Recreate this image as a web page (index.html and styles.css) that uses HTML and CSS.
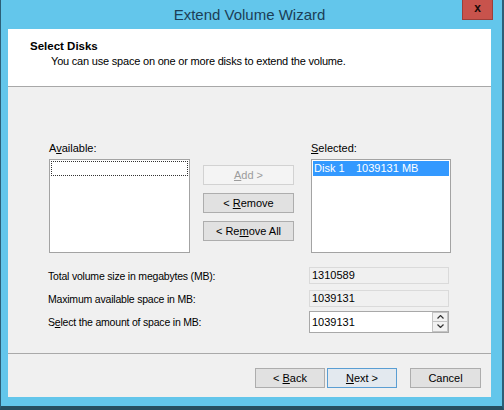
FILE: index.html
```html
<!DOCTYPE html>
<html lang="en">

<head>
    <meta charset="UTF-8">
    <link rel="stylesheet" href="styles.css">
    <title>Extend Volume Wizard</title>
</head>

<body>
    <div class="window">
        <div class="titlebar">
            <span class="title">Extend Volume Wizard</span>
            <div class="close-btn">x</div>
        </div>

        <div class="client">
            <div class="header">
                <div class="header-title">Select Disks</div>
                <div class="header-sub">You can use space on one or more disks to extend the volume.</div>
            </div>

            <div class="body">
                <div class="lists">
                    <div class="list-col left-col">
                        <div class="list-label">A<u>v</u>ailable:</div>
                        <div class="listbox">
                            <div class="list-row focus-row"></div>
                        </div>
                    </div>

                    <div class="move-buttons">
                        <button class="btn disabled"><u>A</u>dd &gt;</button>
                        <button class="btn">&lt; <u>R</u>emove</button>
                        <button class="btn">&lt; Re<u>m</u>ove All</button>
                    </div>

                    <div class="list-col right-col">
                        <div class="list-label"><u>S</u>elected:</div>
                        <div class="listbox">
                            <div class="list-row selected-row">
                                <span class="disk-name">Disk 1</span>
                                <span>1039131 MB</span>
                            </div>
                        </div>
                    </div>
                </div>

                <div class="fields">
                    <div class="field-row">
                        <label class="field-label">Total volume size in megabytes (MB):</label>
                        <div class="readonly-box">1310589</div>
                    </div>
                    <div class="field-row">
                        <label class="field-label">Maximum available space in MB:</label>
                        <div class="readonly-box">1039131</div>
                    </div>
                    <div class="field-row">
                        <label class="field-label" for="amount">S<u>e</u>lect the amount of space in MB:</label>
                        <div class="spin-box">
                            <input type="text" id="amount" value="1039131">
                            <div class="spin-buttons">
                                <div class="spin-btn">
                                    <svg width="7" height="4" viewBox="0 0 7 4"><path d="M0.5 3.5 L3.5 0.5 L6.5 3.5" fill="none" stroke="#333" stroke-width="1.2"/></svg>
                                </div>
                                <div class="spin-btn">
                                    <svg width="7" height="4" viewBox="0 0 7 4"><path d="M0.5 0.5 L3.5 3.5 L6.5 0.5" fill="none" stroke="#333" stroke-width="1.2"/></svg>
                                </div>
                            </div>
                        </div>
                    </div>
                </div>
            </div>

            <div class="footer">
                <button class="btn nav-btn">&lt; <u>B</u>ack</button>
                <button class="btn nav-btn default-btn"><u>N</u>ext &gt;</button>
                <button class="btn nav-btn cancel-btn">Cancel</button>
            </div>
        </div>
    </div>
</body>

</html>
```

FILE: styles.css
```css
body {
    margin: 0;
    font-family: "Liberation Sans", Arial, sans-serif;
    font-size: 11px;
    color: #000;
}

.window {
    width: 504px;
    height: 410px;
    box-sizing: border-box;
    background-color: #63c6eb;
    border-left: 1px solid #2c5f78;
    border-right: 2px solid #2c5f78;
    border-bottom: 4px solid #274e60;
    display: flex;
    flex-direction: column;
}

.titlebar {
    height: 29px;
    position: relative;
    display: flex;
    align-items: center;
    justify-content: center;
    flex-shrink: 0;
}

.title {
    font-size: 15px;
    color: #1c3e56;
    margin-left: -4px;
}

/* window close control sits over the title bar */
.close-btn {
    position: absolute;
    top: 0;
    right: 9px;
    width: 31px;
    height: 20px;
    box-sizing: border-box;
    background-color: #c8534c;
    border: 1px solid #9c3f3a;
    border-top: none;
    color: #1a0a08;
    font-weight: bold;
    font-size: 12px;
    line-height: 17px;
    text-align: center;
}

.client {
    flex: 1;
    margin: 0 11px 9px 7px;
    background-color: #f0f0f0;
    display: flex;
    flex-direction: column;
}

.header {
    height: 58px;
    box-sizing: border-box;
    background-color: #fff;
    border-bottom: 1px solid #a8a8a8;
    padding: 10px 0 0 22px;
}

.header-title {
    font-weight: bold;
    font-size: 11.5px;
    line-height: 14px;
}

.header-sub {
    line-height: 14px;
    padding-left: 21px;
    margin-top: 1px;
    letter-spacing: -0.2px;
}

.body {
    flex: 1;
    padding: 54px 0 0 41px;
}

.lists {
    display: flex;
    align-items: flex-start;
}

.list-label {
    line-height: 15px;
    margin-bottom: 3px;
}

.left-col .listbox {
    width: 141px;
}

.right-col {
    margin-left: 17px;
}

.right-col .listbox {
    width: 140px;
}

.listbox {
    height: 94px;
    box-sizing: border-box;
    background-color: #fff;
    border: 1px solid #a3a3a3;
    padding: 1px;
}

.list-row {
    height: 15px;
    box-sizing: border-box;
    line-height: 14px;
}

.focus-row {
    border: 1px dotted #333;
}

.selected-row {
    background-color: #3399ff;
    color: #fff;
    padding-left: 1px;
    display: flex;
}

.disk-name {
    width: 42px;
}

.move-buttons {
    width: 91px;
    margin-left: 13px;
    padding-top: 24px;
    display: flex;
    flex-direction: column;
    gap: 8px;
}

.btn {
    height: 20px;
    box-sizing: border-box;
    background-color: #e1e1e1;
    border: 1px solid #adadad;
    font-family: "Liberation Sans", Arial, sans-serif;
    font-size: 11px;
    color: #000;
    padding: 0;
}

.btn.disabled {
    background-color: #f4f4f4;
    border-color: #d2d2d2;
    color: #9c9c9c;
}

.fields {
    margin-top: 11px;
}

.field-row {
    height: 23px;
    display: flex;
    align-items: center;
}

.field-label {
    width: 261px;
    margin-left: -1px;
    font-size: 10.5px;
    letter-spacing: -0.2px;
}

.readonly-box {
    width: 140px;
    height: 17px;
    box-sizing: border-box;
    border: 1px solid #dadada;
    background-color: #f0f0f0;
    padding-left: 2px;
    line-height: 15px;
}

.spin-box {
    width: 140px;
    height: 22px;
    box-sizing: border-box;
    border: 1px solid #a8a8a8;
    background-color: #fff;
    display: flex;
}

.spin-box input {
    flex: 1;
    min-width: 0;
    border: none;
    outline: none;
    padding: 0 0 0 2px;
    font-family: "Liberation Sans", Arial, sans-serif;
    font-size: 11px;
}

.spin-buttons {
    width: 16px;
    display: flex;
    flex-direction: column;
}

.spin-btn {
    flex: 1;
    background-color: #f2f2f2;
    border: 1px solid #c4c4c4;
    display: flex;
    align-items: center;
    justify-content: center;
}

.spin-btn + .spin-btn {
    border-top: none;
}

.footer {
    height: 44px;
    box-sizing: border-box;
    border-top: 1px solid #a9a9a9;
    padding: 14px 10px 0 0;
    display: flex;
    justify-content: flex-end;
    align-items: flex-start;
    gap: 2px;
}

.nav-btn {
    width: 70px;
}

.default-btn {
    border-color: #5a9ed3;
    background-color: #e3e9ef;
}

.cancel-btn {
    width: 71px;
    margin-left: 11px;
}
```
